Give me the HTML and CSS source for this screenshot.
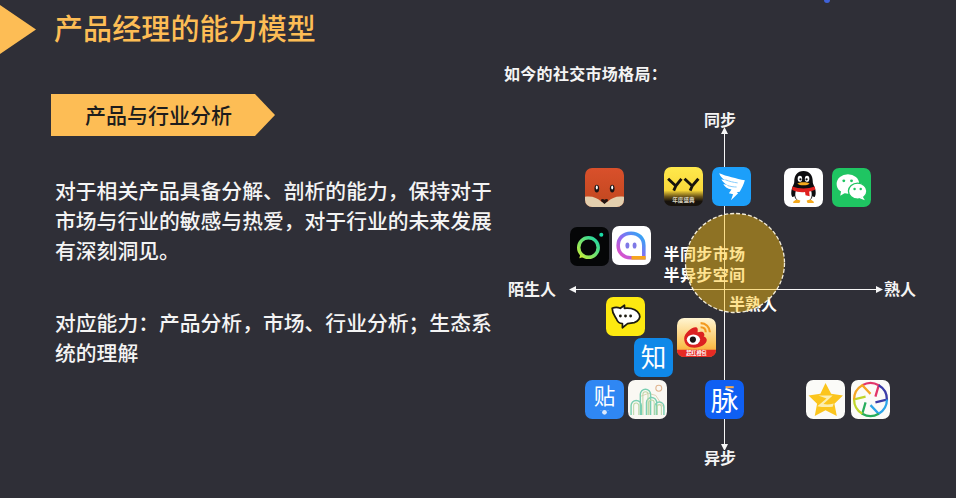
FILE: index.html
```html
<!DOCTYPE html>
<html lang="zh-CN">
<head>
  <meta charset="UTF-8">
  <meta name="viewport" content="width=device-width, initial-scale=1.0">
  <title>产品经理的能力模型</title>
  <link rel="stylesheet" href="styles.css">
</head>
<body>
  <div class="slide">
    <span class="top-dot"></span>
    <header class="slide-header">
      <div class="header-arrow"></div>
      <h1>产品经理的能力模型</h1>
    </header>

    <main class="slide-body">
      <section class="left-col">
        <div class="tag">产品与行业分析</div>
        <p class="para">对于相关产品具备分解、剖析的能力，保持对于市场与行业的敏感与热爱，对于行业的未来发展有深刻洞见。</p>
        <p class="para para-second">对应能力：产品分析，市场、行业分析；生态系统的理解</p>
      </section>

      <section class="right-col">
        <h2>如今的社交市场格局<span class="colon">：</span></h2>
        <div class="map">
          <svg class="axes" viewBox="0 0 420 340" width="420" height="340">
            <path d="M220.500 23V335M66 179.500H374" stroke="#f6f6f6" stroke-width="1" fill="none"/>
            <path d="M220.500 17l-3.500 7h7zM220.500 341l-3.500-7h7zM65 179.500l7-3.500v7zM379 179.500l-7-3.500v7z" fill="#f6f6f6"/>
          </svg>

          <span class="label label-top">同步</span>
          <span class="label label-bottom">异步</span>
          <span class="label label-left">陌生人</span>
          <span class="label label-right">熟人</span>
          <span class="label label-semi">半同步市场<br>半异步空间</span>
          <span class="label label-half">半熟人</span>
          <svg class="circle" viewBox="0 0 102 102">
            <circle cx="51" cy="51" r="49.500" fill="#ffc310" fill-opacity=".46" stroke="#f3ecd8" stroke-width="1.300" stroke-dasharray="4 2"/>
          </svg>

          <!-- 探探 -->
          <svg class="app app-fox" viewBox="0 0 38 38">
            <defs><linearGradient id="foxBg" x1="0" y1="0" x2="0" y2="1"><stop offset="0" stop-color="#d9502b"/><stop offset="1" stop-color="#c0471f"/></linearGradient></defs>
            <rect width="38" height="38" rx="7" fill="url(#foxBg)"/>
            <path d="M0 28c7-1 12 1 16 5h6c4-4 9-6 16-5v3a7 7 0 0 1-7 7H7a7 7 0 0 1-7-7z" fill="#e3cfae"/>
            <ellipse cx="11.500" cy="20" rx="2.300" ry="3.800" fill="#1c1414"/>
            <ellipse cx="26.500" cy="20" rx="2.300" ry="3.800" fill="#1c1414"/>
            <ellipse cx="11.500" cy="19" rx="1" ry="2" fill="#fff"/>
            <ellipse cx="26.500" cy="19" rx="1" ry="2" fill="#fff"/>
            <path d="M15.500 31c1-1.200 2.500-1 3.500 0 1-1 2.500-1.200 3.500 0 0 1.500-2 3-3.500 4-1.500-1-3.500-2.500-3.500-4z" fill="#241511"/>
          </svg>

          <!-- YY -->
          <svg class="app app-yy" viewBox="0 0 38 38">
            <defs><linearGradient id="yyBg" x1="0" y1="0" x2="0" y2="1"><stop offset="0" stop-color="#ffe94c"/><stop offset=".6" stop-color="#f9d83a"/><stop offset=".76" stop-color="#6b5418"/><stop offset=".88" stop-color="#17120c"/></linearGradient></defs>
            <rect width="38" height="38" rx="7" fill="url(#yyBg)"/>
            <path d="M4 11.500l7.500 7 5.500-7M11.500 18.500l-2 4.500M20 11.500l7.500 7 6-7M27.500 18.500l-2 4.500" stroke="#17130d" stroke-width="2.800" fill="none"/>
            <text class="app-tiny" x="19" y="34.500" text-anchor="middle" font-size="5.500" fill="#d9d4c2">年度盛典</text>
          </svg>

          <!-- 钉钉 -->
          <svg class="app app-ding" viewBox="0 0 38 38">
            <rect width="38" height="38" rx="7" fill="#1c9ffa"/>
            <path d="M7 6c7 3 17 5 25 7-1 4-3 8-5 11l-3 .500 1.500 1-7 7 2-6-4-1 2.500-3.500c-4-1-7-3-8-5.500l4 1c-3-1.500-5-3.500-6-5.500l4 1C10 11 8 9 7 6z" fill="#fff"/>
            <path d="M13 12.500c4 1.500 8 2.500 12 3M15 18c3 1 6 1.500 9 1.500" stroke="#7cc8fb" stroke-width=".9" fill="none"/>
          </svg>

          <!-- Soul -->
          <svg class="app app-soul" viewBox="0 0 38 38">
            <rect width="38" height="38" rx="7" fill="#050607"/>
            <defs><linearGradient id="soulRing" x1="0" y1="1" x2="1" y2="0"><stop offset="0" stop-color="#c6ee3a"/><stop offset="1" stop-color="#18d6a8"/></linearGradient></defs>
            <circle cx="18" cy="20" r="9.500" fill="none" stroke="url(#soulRing)" stroke-width="3.400"/>
            <path d="M10 27l-1 3.500 5-1.500z" fill="#c6ee3a"/>
            <circle cx="30.500" cy="7.500" r="2" fill="#1bdba6"/>
          </svg>

          <!-- 聊天 -->
          <svg class="app app-chat" viewBox="0 0 38 38">
            <defs><linearGradient id="chatRing" x1="0" y1="1" x2="1" y2="0"><stop offset="0" stop-color="#f04ac0"/><stop offset=".5" stop-color="#8a6cf2"/><stop offset="1" stop-color="#22b0f5"/></linearGradient></defs>
            <rect width="38" height="38" rx="7" fill="#fff"/>
            <path d="M31 31H18C11 31 6 26 6 19S11 7 18.500 7 31 12 31 19z" fill="none" stroke="url(#chatRing)" stroke-width="3.500"/>
            <path d="M19 31h13.700" stroke="#f6a51e" stroke-width="3.500"/>
            <ellipse cx="15" cy="19" rx="1.900" ry="3" fill="#7e78e6"/>
            <ellipse cx="22" cy="19" rx="1.900" ry="3" fill="#7e78e6"/>
          </svg>

          <!-- QQ -->
          <svg class="app app-qq" viewBox="0 0 38 38">
            <rect width="38" height="38" rx="7" fill="#fff"/>
            <path d="M19 3c-6 0-9 4.500-9 10 0 2-.500 3-1.500 5-1.500 3-2 8-.500 10 1 1 2-1 2-1 .500 2 1.500 3.500 3 4.500h12c1.500-1 2.500-2.500 3-4.500 0 0 1 2 2 1 1.500-2 1-7-.500-10-1-2-1.500-3-1.500-5 0-5.500-3-10-9-10z" fill="#0d0d10"/>
            <path d="M12.500 20c4 2 9 2 13 0 1.500 3 2 6 1 9-1 2.500-4 4-7.500 4s-6.500-1.500-7.500-4c-1-3-.500-6 1-9z" fill="#fff"/>
            <ellipse cx="15.500" cy="10.500" rx="2.200" ry="3" fill="#fff"/>
            <ellipse cx="22.500" cy="10.500" rx="2.200" ry="3" fill="#fff"/>
            <circle cx="16" cy="11" r="1.100" fill="#111"/>
            <circle cx="22" cy="11" r="1.100" fill="#111"/>
            <path d="M13 15c3-1.500 9-1.500 12 0-2 2.500-10 2.500-12 0z" fill="#f5a91c"/>
            <path d="M8 18c7 2.500 15 2.500 22 0l.500 3c-2 1-3.500 1.500-6 2l.500 4.500-4-1-.500-3c-4 .500-8 0-12.500-2z" fill="#e0201f"/>
            <path d="M9 33c2-2.500 5-2.500 7-1l-1 2H9zM29 33c-2-2.500-5-2.500-7-1l1 2h6z" fill="#f5a91c"/>
          </svg>

          <!-- 微信 -->
          <svg class="app app-wechat" viewBox="0 0 38 38">
            <rect width="38" height="38" rx="7" fill="#1fc562"/>
            <ellipse cx="15.500" cy="15.500" rx="11" ry="9.500" fill="#fff"/>
            <path d="M9 22l-1 5 5-3z" fill="#fff"/>
            <ellipse cx="25" cy="22.500" rx="9" ry="7.800" fill="#fff" stroke="#1fc562" stroke-width="1.300"/>
            <path d="M30 28l2 3.500-5-2z" fill="#fff"/>
            <circle cx="11.500" cy="12.500" r="1.400" fill="#1fc562"/>
            <circle cx="19" cy="12.500" r="1.400" fill="#1fc562"/>
            <circle cx="22" cy="20.500" r="1.200" fill="#1fc562"/>
            <circle cx="28" cy="20.500" r="1.200" fill="#1fc562"/>
          </svg>

          <!-- 黄色气泡 -->
          <svg class="app app-bubble" viewBox="0 0 38 38">
            <rect width="38" height="38" rx="7" fill="#fde910"/>
            <path d="M6 11c3-1.500 6-1 8 0l4-3v3c6-.500 12 1 14.500 6 1.500 3-1 7-5 8l-6.500 1-5 4v-4c-3 0-5-2-6-5-1-2-4-5-4-10z" fill="#fff" stroke="#1c1a10" stroke-width="1.700" stroke-linejoin="round"/>
            <circle cx="14" cy="18.500" r="1.400" fill="#1c1a10"/>
            <circle cx="19" cy="18.500" r="1.400" fill="#1c1a10"/>
            <circle cx="24" cy="18.500" r="1.400" fill="#1c1a10"/>
          </svg>

          <!-- 微博 -->
          <svg class="app app-weibo" viewBox="0 0 38 38">
            <defs><linearGradient id="weiboBg" x1="0" y1="0" x2="0" y2="1"><stop offset="0" stop-color="#fff5d2"/><stop offset=".7" stop-color="#fbc253"/><stop offset="1" stop-color="#f59a26"/></linearGradient></defs>
            <rect width="38" height="38" rx="7" fill="url(#weiboBg)"/>
            <path d="M0 31h38v.500a6.500 6.500 0 0 1-6.500 6.500h-25A6.500 6.500 0 0 1 0 31.500z" fill="#e62a24"/>
            <path d="M7 20c0-5 7-11 11-11 2.500 0 2.500 2.500 2 5 3-1 6-1 6.500 1.500.500 1 0 2-.500 2.500 2 .500 3 2 3 3.500 0 4-6 7.500-12 7.500S7 26 7 20z" fill="#dc2121"/>
            <ellipse cx="16" cy="21" rx="6.500" ry="5" fill="#fff"/>
            <circle cx="15.500" cy="21" r="3" fill="#1a1414"/>
            <path d="M23 5c5 0 9 4 9 9M23 9c3 0 5 2 5 5" stroke="#f39a1e" stroke-width="2" fill="none"/>
            <text class="app-tiny" x="19" y="36.500" text-anchor="middle" font-size="5" fill="#fff">超红橙包</text>
          </svg>

          <!-- 知乎 -->
          <svg class="app app-zhihu" viewBox="0 0 38 38">
            <rect width="38" height="38" rx="7" fill="#0f88e8"/>
            <text class="app-letter" x="19" y="28.500" text-anchor="middle" font-size="25" fill="#fff">知</text>
          </svg>

          <!-- 贴吧 -->
          <svg class="app app-tieba" viewBox="0 0 38 38">
            <rect width="38" height="38" rx="7" fill="#2f87f3"/>
            <text class="app-letter" x="19" y="23" text-anchor="middle" font-size="21" fill="#fff">贴</text>
            <circle cx="19" cy="31.500" r="2.300" fill="#dbeafe"/>
            <path d="M15.500 29.500v.100M22.500 29.500v.100" stroke="#dbeafe" stroke-width="1.500"/>
          </svg>

          <!-- 山 -->
          <svg class="app app-hill" viewBox="0 0 38 38">
            <rect width="38" height="38" rx="7" fill="#faf8f3"/>
            <circle cx="30" cy="8" r="2.900" fill="none" stroke="#e0b48f" stroke-width="1"/>
            <path d="M12 16l8-3 7 2 8 12" fill="none" stroke="#d9c9a8" stroke-width=".8"/>
            <path d="M3 34v-9a5 5 0 0 1 10 0v9M12 34V14a5 5 0 0 1 10 0v20M18 34V22a5 5 0 0 1 10 0v12M26 34v-8a4.500 4.500 0 0 1 9 0v8" fill="none" stroke="#7acfb2" stroke-width="1.400"/>
            <path d="M5.500 34v-9a2.500 2.500 0 0 1 5 0v9M14.500 34V14a2.500 2.500 0 0 1 5 0v20M20.500 34V22a2.500 2.500 0 0 1 5 0v12M28.500 34v-8a2 2 0 0 1 4 0v8" fill="none" stroke="#bcd8a6" stroke-width="1"/>
          </svg>

          <!-- 脉脉 -->
          <svg class="app app-mai" viewBox="0 0 38 38">
            <rect width="38" height="38" rx="7" fill="#0f5ff2"/>
            <text class="app-letter" x="19" y="30.500" text-anchor="middle" font-size="27" fill="#fff">脉</text>
            <path d="M20 7h8" stroke="#f4a94b" stroke-width="2"/>
          </svg>

          <!-- QQ空间 -->
          <svg class="app app-qzone" viewBox="0 0 38 38">
            <rect width="38" height="38" rx="7" fill="#fbfbf8"/>
            <path d="M19 3l5.500 10.500 11.500 1.700-8.300 8 2.300 11.800L19 29.500 8.500 35 10.800 23.200 2.500 15.200 14 13.500z" fill="#fbc51d"/>
            <path d="M12 15h14l-9 8.500c3 .500 6 .500 10-.500l-1 3c-5 .500-10 .500-15-.500l9-7.500z" fill="#fbeeb0"/>
          </svg>

          <!-- 彩色光圈 -->
          <svg class="app app-lens" viewBox="0 0 38 38">
            <rect width="38" height="38" rx="7" fill="#fbfbf8"/>
            <g fill="none" stroke-width="2.200">
              <path d="M11 5.140A16 16 0 0 1 27 5.140L23.800 16.250" stroke="#e2356b"/>
              <path d="M27 5.140A16 16 0 0 1 35 19L23.800 21.750" stroke="#3a3ca8"/>
              <path d="M35 19A16 16 0 0 1 27 32.860L19 24.500" stroke="#2ba4e8"/>
              <path d="M27 32.860A16 16 0 0 1 11 32.860L14.200 21.750" stroke="#27ad5c"/>
              <path d="M11 32.860A16 16 0 0 1 3 19L14.200 16.250" stroke="#bfd62a"/>
              <path d="M3 19A16 16 0 0 1 11 5.140L19 13.500" stroke="#f5a623"/>
            </g>
          </svg>
        </div>
      </section>
    </main>
  </div>
</body>
</html>
```

FILE: styles.css
```css
* {
  margin: 0;
  padding: 0;
  box-sizing: border-box;
}

body {
  font-family: "Noto Sans CJK SC", "Noto Sans", sans-serif;
  background-color: #2f2f37;
  color: #fff;
  overflow: hidden;
}

.slide {
  position: relative;
  width: 956px;
  height: 498px;
  overflow: hidden;
}

.top-dot {
  position: absolute;
  top: -3px;
  left: 824px;
  width: 6px;
  height: 6px;
  border-radius: 50%;
  background: #3f62d8;
}

.slide-header {
  display: flex;
  align-items: center;
  gap: 18px;
  padding-top: 5px;
}

.header-arrow {
  width: 36px;
  height: 49px;
  background: #fdbd55;
  clip-path: polygon(0 0, 100% 50%, 0 100%);
}

h1 {
  font-size: 29px;
  font-weight: 500;
  line-height: 46px;
  letter-spacing: 0.1px;
  color: #fdbd55;
  transform: translateY(-3px);
}

.slide-body {
  display: flex;
}

.left-col {
  width: 504px;
  padding: 40px 0 0 51px;
}

.tag {
  display: flex;
  align-items: center;
  justify-content: center;
  width: 224px;
  height: 42px;
  padding: 0 9px 3px 0;
  font-size: 21px;
  font-weight: 500;
  color: #1d1d1d;
  background: #fdbd55;
  clip-path: polygon(0 0, 204px 0, 100% 50%, 204px 100%, 0 100%);
}

.para {
  width: 440px;
  margin: 39px 0 0 4px;
  font-size: 20.8px;
  font-weight: 500;
  line-height: 30px;
  color: #f4f4f4;
}

.para-second {
  margin-top: 42px;
}

.right-col {
  width: 452px;
}

h2 {
  height: 56px;
  padding-top: 7px;
  margin-bottom: 1px;
  font-size: 16px;
  font-weight: 700;
  line-height: 24px;
  letter-spacing: 0.3px;
  color: #f4f4f4;
}

.colon {
  font-family: "Noto Sans CJK TC", sans-serif;
}

.map {
  position: relative;
  width: 420px;
  height: 340px;
  margin-top: -1px;
}

.axes {
  position: absolute;
  top: 0;
  left: 0;
}

.label {
  position: absolute;
  font-size: 16px;
  font-weight: 700;
  line-height: 21px;
  color: #f4f4f4;
  white-space: nowrap;
}

.label-top { left: 200px; top: -1px; }
.label-bottom { left: 200px; top: 337px; }
.label-left { left: 4px; top: 168px; }
.label-right { left: 380px; top: 168px; }
.label-semi { left: 159.500px; top: 132.500px; color: #fff; letter-spacing: 0.4px; }
.label-half { left: 225px; top: 183px; color: #fff; }

.circle {
  position: absolute;
  left: 180px;
  top: 102px;
  width: 102px;
  height: 102px;
}

.app {
  position: absolute;
  width: 39px;
  height: 39px;
}

.app-tiny {
  font-weight: 700;
}

.app-letter {
  font-weight: 400;
}

.app-fox { left: 81px; top: 58px; }
.app-yy { left: 160px; top: 57px; }
.app-ding { left: 208px; top: 57px; }
.app-soul { left: 66px; top: 117px; }
.app-chat { left: 108px; top: 116px; }
.app-qq { left: 280px; top: 58px; }
.app-wechat { left: 328px; top: 58px; }
.app-bubble { left: 102px; top: 187px; }
.app-weibo { left: 173px; top: 208px; }
.app-zhihu { left: 130px; top: 228px; }
.app-tieba { left: 81px; top: 270px; }
.app-hill { left: 124px; top: 270px; }
.app-mai { left: 201px; top: 270px; }
.app-qzone { left: 302px; top: 270px; }
.app-lens { left: 347px; top: 270px; }
```
